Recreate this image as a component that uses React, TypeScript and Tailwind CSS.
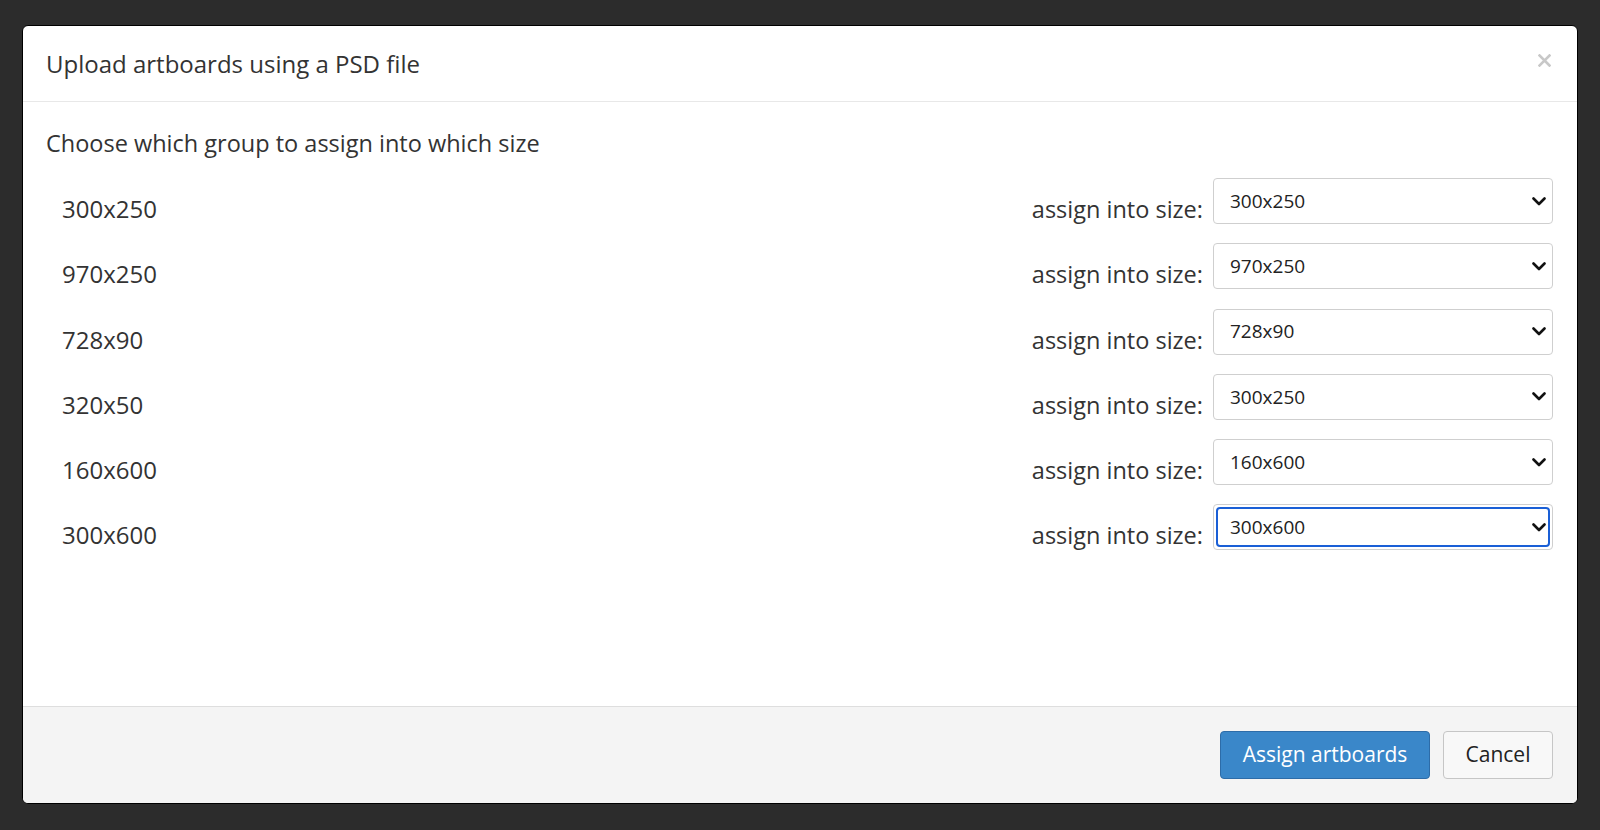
const ROWS = [
    { group: "300x250", size: "300x250" },
    { group: "970x250", size: "970x250" },
    { group: "728x90", size: "728x90" },
    { group: "320x50", size: "300x250" },
    { group: "160x600", size: "160x600" },
    { group: "300x600", size: "300x600", focused: true }
]

const Chevron = () => (
    <svg width="14" height="9" viewBox="0 0 14 9" fill="none" className="shrink-0">
        <path d="M1.5 1.5 7 7l5.5-5.5" stroke="#111" strokeWidth="2.6" strokeLinecap="round" strokeLinejoin="round" />
    </svg>
)

const CloseIcon = () => (
    <svg width="13" height="13" viewBox="0 0 13 13" fill="none">
        <path d="M1.5 1.5l10 10M11.5 1.5l-10 10" stroke="#c8c8c8" strokeWidth="2.6" strokeLinecap="square" />
    </svg>
)

const SizeSelect = ({ value, focused }: { value: string; focused?: boolean }) => (
    <div className="h-[46px] w-[340px] rounded-[4px] border border-[#cfcfcf] bg-white p-[2px]">
        <div
            className={
                focused
                    ? "flex h-full items-center justify-between rounded-[4px] border-2 border-[#1a5fd6] pr-[2px] pl-[12px]"
                    : "flex h-full items-center justify-between rounded-[4px] border-2 border-transparent pr-[2px] pl-[12px]"
            }
        >
            <span className="text-[19px] text-[#222]">{value}</span>
            <Chevron />
        </div>
    </div>
)

export default function App() {
    return (
        <div
            className="h-[830px] w-full bg-[#2c2c2c] pt-[25px] pl-[22px]"
            style={{ fontFamily: '"Open Sans", "Noto Sans", sans-serif' }}
        >
            <div className="flex h-[779px] w-[1556px] flex-col overflow-hidden rounded-[6px] border border-black bg-white text-[#333]">
                <div className="flex h-[76px] shrink-0 items-center justify-between border-b border-[#e8e8e8] pr-[26px] pl-[23px]">
                    <h1 className="text-[24px]">Upload artboards using a PSD file</h1>
                    <span className="pb-[6px]">
                        <CloseIcon />
                    </span>
                </div>

                <div className="flex-1 pt-[24px] pr-[24px] pl-[23px]">
                    <p className="text-[23.5px] leading-[34px]">Choose which group to assign into which size</p>

                    <div className="mt-[18px] flex flex-col gap-[19.3px]">
                        {ROWS.map((r) => (
                            <div key={r.group} className="flex h-[46px] items-center justify-between pl-[16px]">
                                <span className="pt-[16px] text-[24px] leading-[32px]">{r.group}</span>
                                <div className="flex items-center gap-[10px]">
                                    <span className="pt-[16px] text-[23.5px] leading-[32px]">assign into size:</span>
                                    <SizeSelect value={r.size} focused={r.focused} />
                                </div>
                            </div>
                        ))}
                    </div>
                </div>

                <div className="flex h-[97px] shrink-0 items-center justify-end gap-[13px] border-t border-[#dedede] bg-[#f4f4f4] pr-[24px]">
                    <button
                        type="button"
                        className="h-[48px] w-[210px] rounded-[4px] border border-[#2d6ca8] bg-[#3a87c9] text-[21px] text-white"
                    >
                        Assign artboards
                    </button>
                    <button
                        type="button"
                        className="h-[48px] w-[110px] rounded-[4px] border border-[#c6c6c6] bg-[#f8f8f8] text-[21px] text-[#222]"
                    >
                        Cancel
                    </button>
                </div>
            </div>
        </div>
    )
}
